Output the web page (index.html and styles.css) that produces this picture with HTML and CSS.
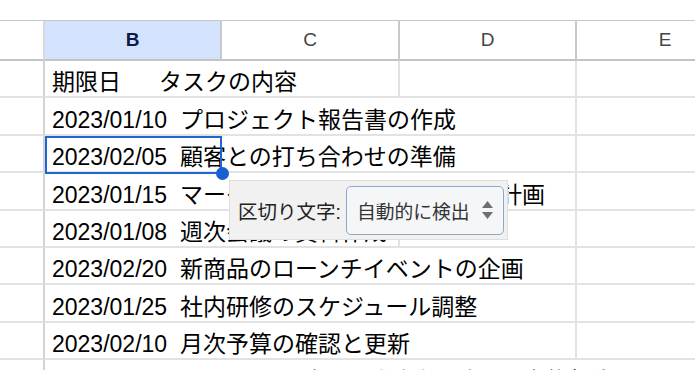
FILE: index.html
```html
<!DOCTYPE html>
<html lang="ja">
<head>
    <meta charset="UTF-8">
    <meta name="viewport" content="width=device-width, initial-scale=1.0">
    <title>シート</title>
    <link rel="stylesheet" href="styles.css">
</head>
<body>
    <div class="sheet">
        <!-- 列見出し -->
        <div class="row head">
            <div class="rh"></div>
            <div class="ch active">B</div>
            <div class="ch">C</div>
            <div class="ch">D</div>
            <div class="ch">E</div>
        </div>

        <!-- データ行 -->
        <div class="row">
            <div class="rh"></div>
            <div class="cell span2"><span>期限日</span><span class="tab">タスクの内容</span></div>
            <div class="cell"></div>
            <div class="cell"></div>
        </div>
        <div class="row">
            <div class="rh"></div>
            <div class="cell span3">2023/01/10&nbsp;&nbsp;プロジェクト報告書の作成</div>
            <div class="cell"></div>
        </div>
        <div class="row">
            <div class="rh"></div>
            <div class="cell span3">2023/02/05&nbsp;&nbsp;顧客との打ち合わせの準備</div>
            <div class="cell"></div>
        </div>
        <div class="row">
            <div class="rh"></div>
            <div class="cell span3">2023/01/15&nbsp;&nbsp;マーケティングキャンペーンの計画</div>
            <div class="cell"></div>
        </div>
        <div class="row">
            <div class="rh"></div>
            <div class="cell span2">2023/01/08&nbsp;&nbsp;週次会議の資料作成</div>
            <div class="cell"></div>
            <div class="cell"></div>
        </div>
        <div class="row">
            <div class="rh"></div>
            <div class="cell span3">2023/02/20&nbsp;&nbsp;新商品のローンチイベントの企画</div>
            <div class="cell"></div>
        </div>
        <div class="row">
            <div class="rh"></div>
            <div class="cell span3">2023/01/25&nbsp;&nbsp;社内研修のスケジュール調整</div>
            <div class="cell"></div>
        </div>
        <div class="row">
            <div class="rh"></div>
            <div class="cell span3">2023/02/10&nbsp;&nbsp;月次予算の確認と更新</div>
            <div class="cell"></div>
        </div>
        <div class="row">
            <div class="rh"></div>
            <div class="cell span4">2023/02/15&nbsp;&nbsp;チームビルディング活動の計画と実施報告</div>
        </div>

        <!-- 選択中のセル -->
        <div class="selection"></div>
        <div class="handle"></div>

        <!-- 区切り文字のポップアップ -->
        <div class="popup">
            <span class="popup-label">区切り文字:</span>
            <div class="select">
                <span>自動的に検出</span>
                <svg class="spin" width="13" height="22" viewBox="0 0 13 22">
                    <path d="M1 9 L6.5 2 L12 9 Z" fill="#6f6f6f"/>
                    <path d="M1 13 L6.5 20 L12 13 Z" fill="#6f6f6f"/>
                </svg>
            </div>
        </div>
    </div>
</body>
</html>
```

FILE: styles.css
```css
body {
    margin: 0;
    padding: 0;
    background: #ffffff;
    font-family: "Liberation Sans", "Noto Sans CJK JP", sans-serif;
    color: #000;
}

.sheet {
    position: relative;
    margin-top: 20px;
    width: 695px;
    height: 350px;
    overflow: hidden;
}

.row {
    display: grid;
    grid-template-columns: 45px 177px 178px 177px 178px;
    height: 37.375px;
    width: 755px;
}

.row.head {
    height: 41px;
    border-top: 1px solid #c7c7c7;
    box-sizing: border-box;
}

.rh {
    border-right: 2px solid #d3d3d3;
    border-bottom: 2px solid #e2e2e2;
    background: #fff;
}

.head .rh {
    border-right: 2px solid #d8d8d8;
    border-bottom: 2px solid #c4c4c4;
}

.ch {
    display: flex;
    align-items: center;
    justify-content: center;
    font-size: 19px;
    color: #444746;
    border-right: 2px solid #c9c9c9;
    border-bottom: 2px solid #c4c4c4;
}

.ch.active {
    background: #d3e3fd;
    color: #0b1d45;
    font-weight: bold;
}

.cell {
    display: flex;
    align-items: flex-end;
    padding: 0 0 2px 7px;
    font-size: 23px;
    line-height: 23px;
    white-space: nowrap;
    border-right: 2px solid #e2e2e2;
    border-bottom: 2px solid #e2e2e2;
}

.span2 {
    grid-column: span 2;
}

.span3 {
    grid-column: span 3;
}

.span4 {
    grid-column: span 4;
}

.tab {
    margin-left: 38px;
}

.selection {
    position: absolute;
    left: 45px;
    top: 116px;
    width: 177px;
    height: 38px;
    box-sizing: border-box;
    border: 2px solid #1f66d1;
}

.handle {
    position: absolute;
    left: 216px;
    top: 147px;
    width: 13px;
    height: 13px;
    border-radius: 50%;
    background: #1a5fd2;
}

.popup {
    position: absolute;
    left: 229px;
    top: 160px;
    width: 279px;
    height: 60px;
    box-sizing: border-box;
    background: #f1f1f1;
    border: 1px solid #dedede;
    display: flex;
    align-items: center;
    padding-left: 8px;
}

.popup-label {
    font-size: 19.5px;
    color: #222;
}

.select {
    margin-left: 5px;
    width: 158px;
    height: 49px;
    box-sizing: border-box;
    border: 1px solid #8ea6c9;
    border-radius: 5px;
    background: #f5f6f8;
    display: flex;
    align-items: center;
    justify-content: space-between;
    padding: 0 9px 0 10px;
    font-size: 18.8px;
    color: #333;
}
```
